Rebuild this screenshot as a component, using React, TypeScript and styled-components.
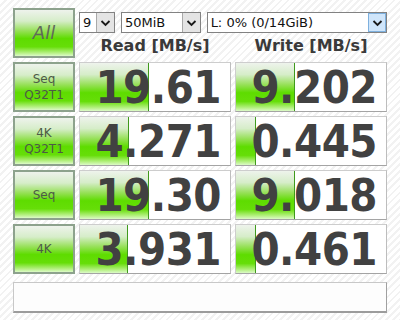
import React from "react";
import styled, { createGlobalStyle } from "styled-components";

const Global = createGlobalStyle`
  html, body { margin: 0; padding: 0; }
  body {
    width: 400px;
    height: 320px;
    overflow: hidden;
    font-family: "DejaVu Sans", Verdana, sans-serif;
    background: repeating-linear-gradient(135deg, #ffffff 0px, #ffffff 3px, #f2f2f2 3px, #f2f2f2 5px);
  }
`;

const Frame = styled.div`
  width: 400px;
  height: 320px;
  box-sizing: border-box;
  padding: 8px 13px;
  display: grid;
  grid-template-columns: 62px 152px 152px;
  grid-template-rows: 50px 50px 50px 50px 50px 30px;
  column-gap: 4px;
  row-gap: 4px;
`;

const greenGradient = `linear-gradient(180deg,
  #eef3ec 0%, #d6edc9 24%, #94e054 46%, #5edc00 62%, #66de08 80%, #b4f080 93%, #dcfac8 100%)`;

const LabelButton = styled.div<{ $italic?: boolean }>`
  box-sizing: border-box;
  height: 50px;
  border: 2px solid #8da28d;
  background: ${greenGradient};
  display: flex;
  flex-direction: column;
  align-items: center;
  justify-content: center;
  color: ${(p) => (p.$italic ? "#5f6a5a" : "#4d5a47")};
  font-family: "DejaVu Sans", sans-serif;
  font-size: ${(p) => (p.$italic ? "18px" : "12px")};
  font-style: ${(p) => (p.$italic ? "italic" : "normal")};
  line-height: 16px;
  text-align: center;
`;

const TopArea = styled.div`
  grid-column: 2 / 4;
  display: grid;
  grid-template-columns: 152px 152px;
  grid-template-rows: 24px 26px;
  column-gap: 4px;
`;

const SelectRow = styled.div`
  grid-column: 1 / 3;
  display: flex;
  align-items: flex-start;
  padding-top: 4px;
  gap: 6px;
`;

const SelectBox = styled.div<{ $w: number }>`
  box-sizing: border-box;
  width: ${(p) => p.$w}px;
  height: 21px;
  border: 1px solid #828282;
  background: #ffffff;
  display: flex;
  align-items: stretch;
  font-family: "DejaVu Sans", sans-serif;
  font-size: 13px;
  color: #111;
`;

const SelectText = styled.div`
  flex: 1;
  padding-left: 3px;
  display: flex;
  align-items: center;
  white-space: nowrap;
  overflow: hidden;
`;

const DropButton = styled.div<{ $active?: boolean }>`
  box-sizing: border-box;
  width: 18px;
  border-left: 1px solid ${(p) => (p.$active ? "#5c92c8" : "#a9a9a9")};
  background: ${(p) => (p.$active ? "#cfe5fa" : "#e4e4e4")};
  ${(p) => (p.$active ? "outline: 1px solid #7eb0de; outline-offset: -1px;" : "")}
  display: flex;
  align-items: center;
  justify-content: center;
`;

const Header = styled.div`
  display: flex;
  align-items: center;
  justify-content: center;
  font-family: "DejaVu Sans", sans-serif;
  font-weight: bold;
  font-size: 16px;
  color: #3a3a3a;
  padding-top: 1px;
`;

const Cell = styled.div`
  position: relative;
  box-sizing: border-box;
  height: 50px;
  background: #ffffff;
  border: 1px solid #cdcdcd;
  border-bottom-color: #a4a4a4;
  border-right-color: #bdbdbd;
  display: flex;
  align-items: center;
  justify-content: flex-end;
  padding-right: 9px;
`;

const Bar = styled.div`
  position: absolute;
  left: 0;
  top: 0;
  bottom: 0;
  background: ${greenGradient};
  border-right: 1px solid #3f9a1c;
`;

const Value = styled.span`
  position: relative;
  font-family: "DejaVu Sans Condensed", "DejaVu Sans", sans-serif;
  font-weight: bold;
  font-size: 45px;
  letter-spacing: -0.5px;
  color: #414141;
  line-height: 46px;
  padding-top: 2px;
`;

const Status = styled.div`
  grid-column: 1 / 4;
  margin-top: 4px;
  box-sizing: border-box;
  height: 31px;
  background: #fdfdfd;
  border: 1px solid #c8c8c8;
  border-right-color: #a0a0a0;
  border-bottom: 2px solid #9c9c9c;
`;

const Chevron = () => (
  <svg width="11" height="8" viewBox="0 0 11 8">
    <path d="M1.5 2 L5.5 6 L9.5 2" fill="none" stroke="#1a1a1a" strokeWidth="1.8" />
  </svg>
);

const Select = ({ w, text, active }: { w: number; text: string; active?: boolean }) => (
  <SelectBox $w={w}>
    <SelectText>{text}</SelectText>
    <DropButton $active={active}>
      <Chevron />
    </DropButton>
  </SelectBox>
);

const barWidth = (v: number) => Math.max(0, Math.round(29.3 + 30 * Math.log10(v)));

const rows = [
  { label: ["Seq", "Q32T1"], read: "19.61", write: "9.202" },
  { label: ["4K", "Q32T1"], read: "4.271", write: "0.445" },
  { label: ["Seq"], read: "19.30", write: "9.018" },
  { label: ["4K"], read: "3.931", write: "0.461" },
];

const Result = ({ v }: { v: string }) => (
  <Cell>
    <Bar style={{ width: barWidth(parseFloat(v)) }} />
    <Value>{v}</Value>
  </Cell>
);

export default function App() {
  return (
    <>
      <Global />
      <Frame>
        <LabelButton $italic>All</LabelButton>
        <TopArea>
          <SelectRow>
            <Select w={36} text="9" />
            <Select w={80} text="50MiB" />
            <Select w={181} text="L: 0% (0/14GiB)" active />
          </SelectRow>
          <Header>Read [MB/s]</Header>
          <Header>Write [MB/s]</Header>
        </TopArea>
        {rows.map((r, i) => (
          <React.Fragment key={i}>
            <LabelButton>
              {r.label.map((l) => (
                <div key={l}>{l}</div>
              ))}
            </LabelButton>
            <Result v={r.read} />
            <Result v={r.write} />
          </React.Fragment>
        ))}
        <Status />
      </Frame>
    </>
  );
}
